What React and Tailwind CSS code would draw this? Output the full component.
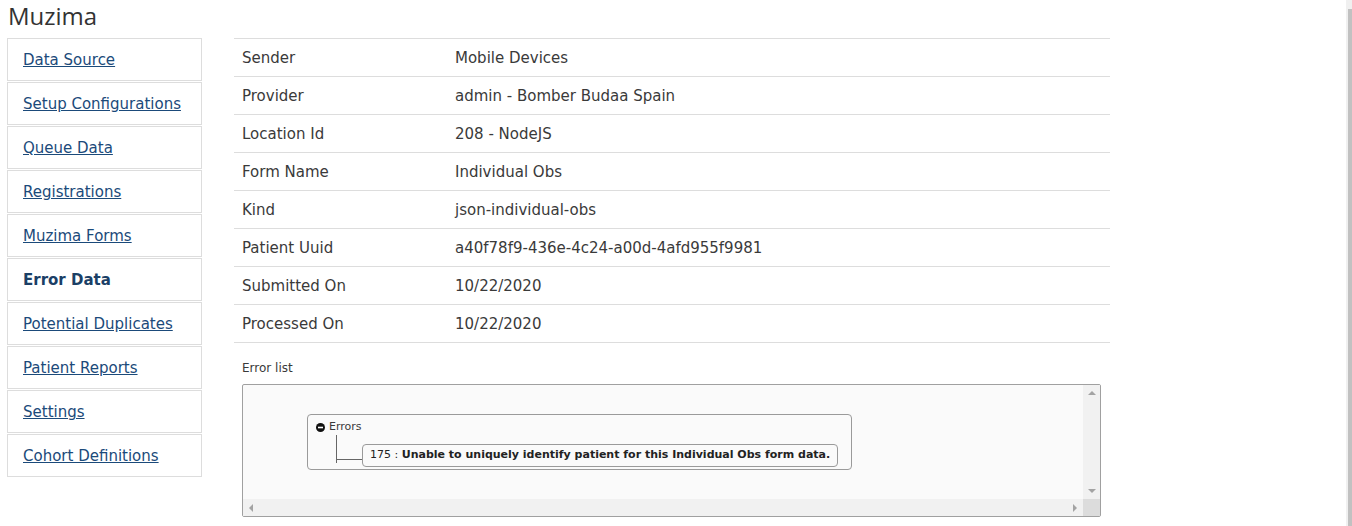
const navItems = [
  'Data Source',
  'Setup Configurations',
  'Queue Data',
  'Registrations',
  'Muzima Forms',
  'Error Data',
  'Potential Duplicates',
  'Patient Reports',
  'Settings',
  'Cohort Definitions',
];

const details = [
  ['Sender', 'Mobile Devices'],
  ['Provider', 'admin - Bomber Budaa Spain'],
  ['Location Id', '208 - NodeJS'],
  ['Form Name', 'Individual Obs'],
  ['Kind', 'json-individual-obs'],
  ['Patient Uuid', 'a40f78f9-436e-4c24-a00d-4afd955f9981'],
  ['Submitted On', '10/22/2020'],
  ['Processed On', '10/22/2020'],
];

const Arrow = ({ dir }) => {
  const pts = {
    up: '0,4 4,0 8,4',
    down: '0,0 8,0 4,4',
    left: '4,0 4,8 0,4',
    right: '0,0 0,8 4,4',
  }[dir];
  const vertical = dir === 'up' || dir === 'down';
  return (
    <svg width={vertical ? 8 : 4} height={vertical ? 4 : 8} viewBox={vertical ? '0 0 8 4' : '0 0 4 8'}>
      <polygon points={pts} fill="#a3a3a3" />
    </svg>
  );
};

const App = () => {
  const active = 'Error Data';

  return (
    <div className="relative min-h-[526px] bg-white text-[#3a3a3a] font-['DejaVu_Sans',sans-serif]">
      <h1 className="h-[38px] pl-[8px] pt-[1px] text-[24px] leading-[30px] text-[#333] font-['Open_Sans',sans-serif]">Muzima</h1>

      <div className="flex">
        {/* Sidebar */}
        <ul className="ml-[7px] flex w-[195px] flex-col gap-[1px]">
          {navItems.map(item => (
            <li
              key={item}
              className="flex h-[43px] items-center border border-[#ddd] px-[15px] pt-[2px] text-[15px]"
            >
              {item === active ? (
                <span className="font-bold text-[#1b3f66]">{item}</span>
              ) : (
                <a href="#" className="text-[#1b4a7a] underline">{item}</a>
              )}
            </li>
          ))}
        </ul>

        {/* Main */}
        <div className="ml-[32px] w-[876px]">
          <table className="w-full border-t border-[#ddd] text-[15px]">
            <tbody>
              {details.map(([label, value]) => (
                <tr key={label} className="h-[38px] border-b border-[#ddd]">
                  <td className="w-[213px] px-[8px] pt-[2px]">{label}</td>
                  <td className="px-[8px] pt-[2px]">{value}</td>
                </tr>
              ))}
            </tbody>
          </table>

          <div className="pl-[8px] pr-[9px]">
            <p className="pt-[18px] pb-[9px] text-[12px] leading-[14px]">Error list</p>

            {/* Error tree viewer */}
            <div className="grid h-[133px] grid-cols-[1fr_17px] grid-rows-[1fr_17px] rounded-[2px] border border-[#a0a0a0] bg-[#fafafa]">
              <div className="pl-[64px] pt-[29px]">
                <div className="w-fit rounded-[4px] border border-[#9a9a9a] pl-[8px] pr-[13px] pt-[4px] pb-[2px]">
                  <div className="flex items-center gap-[4px] text-[11px] leading-[16px]">
                    <svg width="9" height="9" viewBox="0 0 9 9">
                      <circle cx="4.5" cy="4.5" r="4.5" fill="#111" />
                      <rect x="2" y="3.7" width="5" height="1.6" fill="#fff" />
                    </svg>
                    <span>Errors</span>
                  </div>
                  <div className="flex">
                    <div className="ml-[20px] h-[28px] w-[26px] shrink-0 border-l border-[#666]">
                      <div className="mt-[24px] h-px w-full bg-[#666]" />
                    </div>
                    <div className="mt-[9px] flex h-[23px] shrink-0 items-center whitespace-nowrap rounded-[4px] border border-[#9a9a9a] px-[7px] text-[11px] text-[#222]">
                      <span>175 :&nbsp;</span>
                      <span className="font-bold">Unable to uniquely identify patient for this Individual Obs form data.</span>
                    </div>
                  </div>
                </div>
              </div>
              <div className="flex flex-col items-center justify-between bg-[#f1f1f1] py-[6px]">
                <Arrow dir="up" />
                <Arrow dir="down" />
              </div>
              <div className="flex items-center justify-between bg-[#f1f1f1] px-[6px]">
                <Arrow dir="left" />
                <Arrow dir="right" />
              </div>
              <div className="bg-[#dcdcdc]" />
            </div>
          </div>
        </div>
      </div>

      {/* Page scrollbar */}
      <div className="absolute top-0 right-0 bottom-0 w-[6px] bg-[#f0f0f0]">
        <div className="mt-[9px] ml-[2px] h-[517px] bg-[#c1c1c1]" />
      </div>
    </div>
  );
};

export default App;
